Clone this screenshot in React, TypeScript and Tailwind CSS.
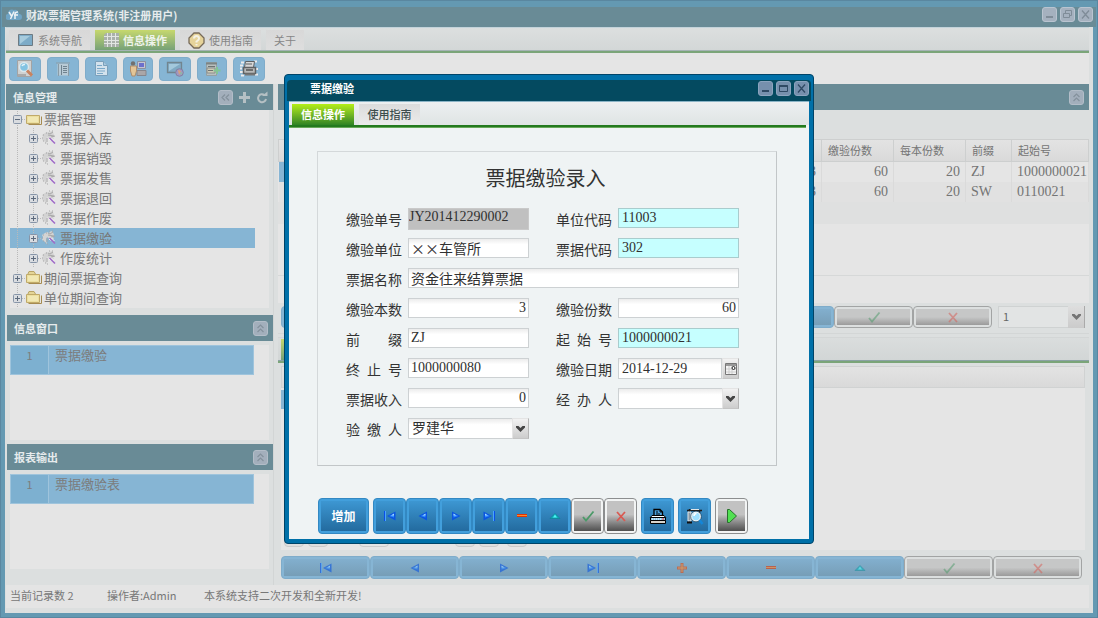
import { ReactNode } from "react";

type IconName =
  | "first"
  | "prev"
  | "next"
  | "last"
  | "plus"
  | "minus"
  | "up"
  | "check"
  | "cross";

type TreeNode = {
  label: string;
  level: 1 | 2;
  open?: boolean;
  selected?: boolean;
};

const treeNodes: TreeNode[] = [
  { label: "票据管理", level: 1, open: true },
  { label: "票据入库", level: 2 },
  { label: "票据销毁", level: 2 },
  { label: "票据发售", level: 2 },
  { label: "票据退回", level: 2 },
  { label: "票据作废", level: 2 },
  { label: "票据缴验", level: 2, selected: true },
  { label: "作废统计", level: 2 },
  { label: "期间票据查询", level: 1 },
  { label: "单位期间查询", level: 1 },
];

const records = [
  { books: "3", copies: "60", perBook: "20", prefix: "ZJ", start: "1000000021" },
  { books: "3", copies: "60", perBook: "20", prefix: "SW", start: "0110021" },
];

const navIcons: IconName[] = [
  "first",
  "prev",
  "next",
  "last",
  "plus",
  "minus",
  "up",
  "check",
  "cross",
];

const iconLabels: Record<IconName, string> = {
  first: "首条",
  prev: "上一条",
  next: "下一条",
  last: "末条",
  plus: "增加",
  minus: "删除",
  up: "编辑",
  check: "保存",
  cross: "取消",
};

const serif =
  "font-['Liberation_Serif','Noto_Sans_CJK_SC',serif] text-sm leading-4";

const NavIcon = ({ name }: { name: IconName }) => (
  <svg width="14" height="12" viewBox="0 0 14 12" className="shrink-0" aria-hidden="true">
    {name === "first" && (
      <>
        <path d="M1 1h1v10H1z" fill="#0a50e6" />
        <path d="M2 1h1v10H2z" fill="#4aa4ff" />
        <path d="M12.500 1.500v9L4 6z" fill="#0b55e0" />
        <path d="M11 4v3.500L6 6z" fill="#2f8cff" />
        <path d="M11 3.500v2L8 5.500z" fill="#a8dcff" />
      </>
    )}
    {name === "prev" && (
      <>
        <path d="M11 1.500v9L2.500 6z" fill="#0b55e0" />
        <path d="M9.500 4v3.500L4.500 6z" fill="#2f8cff" />
        <path d="M9.500 3.500v2L6.500 5.500z" fill="#a8dcff" />
      </>
    )}
    {name === "next" && (
      <>
        <path d="M3 1.500v9L11.500 6z" fill="#0b55e0" />
        <path d="M4.500 4v3.500l5-1.500z" fill="#2f8cff" />
        <path d="M4.500 3.500v2h3z" fill="#a8dcff" />
      </>
    )}
    {name === "last" && (
      <>
        <path d="M1.500 1.500v9L10 6z" fill="#0b55e0" />
        <path d="M3 4v3.500l5-1.500z" fill="#2f8cff" />
        <path d="M3 3.500v2h3z" fill="#a8dcff" />
        <path d="M11 1h1v10h-1z" fill="#4aa4ff" />
        <path d="M12 1h1v10h-1z" fill="#0a50e6" />
      </>
    )}
    {name === "plus" && (
      <>
        <path d="M5.500 1h3v3.500H12v3H8.500V11h-3V7.500H2v-3h3.500z" fill="#e64a10" />
        <path d="M7 2v8M3 6h8" stroke="#ff9a38" strokeWidth="1" />
      </>
    )}
    {name === "minus" && (
      <>
        <path d="M2 4h10v3H2z" fill="#e03406" />
        <path d="M2 5h10v1H2z" fill="#ff8c28" />
      </>
    )}
    {name === "up" && (
      <>
        <path d="M2 8.500L7 3.500l5 5z" fill="#12b0bc" stroke="#07838f" strokeWidth=".6" />
        <path d="M5 7.500L7 4.500 9 7.500z" fill="#4ff4f4" />
      </>
    )}
    {name === "check" && (
      <path d="M2 7l3 3.500L12.500 1.500" fill="none" stroke="#4b9a68" strokeWidth="1.800" />
    )}
    {name === "cross" && (
      <path d="M3 2l8 9M11 2l-8 9" fill="none" stroke="#d85a52" strokeWidth="1.800" />
    )}
  </svg>
);

const isGrey = (name: IconName) => name === "check" || name === "cross";

const DimButton = ({ name }: { name: IconName }) => (
  <button
    type="button"
    aria-label={iconLabels[name]}
    className={
      isGrey(name)
        ? "h-full min-w-0 flex-1 rounded border border-[#a2a4a4] bg-[#dcdfdf] p-[2px]"
        : "h-full min-w-0 flex-1 rounded border border-[#7facca] bg-[#86b5d4] p-[2px]"
    }
  >
    <span
      className={
        isGrey(name)
          ? "flex h-full items-center justify-center bg-linear-to-b from-[#c6c7c7] from-50% to-[#9b9b9b]"
          : "flex h-full items-center justify-center bg-linear-to-b from-[#82afce] to-[#779eb7]"
      }
    >
      <span className={isGrey(name) ? "opacity-50" : "opacity-60"}>
        <NavIcon name={name} />
      </span>
    </span>
  </button>
);

const DialogButton = ({
  label,
  grey,
  wide,
  children,
}: {
  label: string;
  grey?: boolean;
  wide?: boolean;
  children: ReactNode;
}) => (
  <button
    type="button"
    aria-label={label}
    className={`h-9 rounded border p-[2px] ${wide ? "w-[51px]" : "w-[33px]"} ${
      grey ? "border-[#8c8e8f] bg-[#f2f4f4]" : "border-[#3388c2] bg-[#429fdc]"
    }`}
  >
    <span
      className={`flex h-full items-center justify-center text-xs font-bold text-white ${
        grey
          ? "bg-linear-to-b from-[#c2c2c2] from-45% to-[#505050]"
          : "bg-linear-to-b from-[#3d97d2] to-[#236b9f]"
      }`}
    >
      {children}
    </span>
  </button>
);

const WindowButton = ({
  kind,
  dim,
}: {
  kind: "min" | "max" | "restore" | "close";
  dim?: boolean;
}) => (
  <button
    type="button"
    aria-label={kind}
    className={`flex size-[15px] items-center justify-center rounded-[3px] border ${
      dim
        ? "border-[#b9c4d0] bg-[#a5b1bf] text-[#7f8c98]"
        : "border-[#8ba4be] bg-[#7690ad] text-[#2f4a64]"
    }`}
  >
    <svg
      width="11"
      height="11"
      viewBox="0 0 11 11"
      fill="none"
      stroke="currentColor"
      className="shrink-0"
    >
      {kind === "min" && <path d="M2 8h7" strokeWidth="2" />}
      {kind === "max" && (
        <>
          <path d="M1.500 2.500h8v6h-8z" />
          <path d="M1.500 3h8" strokeWidth="2" />
        </>
      )}
      {kind === "restore" && (
        <>
          <path d="M3.500 4.500v-3h6v5h-2" />
          <path d="M1.500 4.500h6v4h-6z" />
        </>
      )}
      {kind === "close" && <path d="M2 1.500l7 8M9 1.500l-7 8" strokeWidth="1.300" />}
    </svg>
  </button>
);

const CollapseButton = ({ left }: { left?: boolean }) => (
  <button
    type="button"
    aria-label="折叠"
    className="flex size-[15px] items-center justify-center rounded-[3px] border border-[#b3bdc8] bg-[#a3afbc]"
  >
    <svg
      width="9"
      height="9"
      viewBox="0 0 9 9"
      fill="none"
      stroke="#84919c"
      className="shrink-0"
    >
      {left ? (
        <path d="M4 1.500L1 4.500l3 3M8 1.500L5 4.500l3 3" strokeWidth="1.200" />
      ) : (
        <path d="M1.500 4l3-3 3 3M1.500 8l3-3 3 3" strokeWidth="1.200" />
      )}
    </svg>
  </button>
);

const PanelHeader = ({ title, children }: { title?: string; children: ReactNode }) => (
  <div className="flex h-[26px] shrink-0 items-center justify-between bg-[#698b96] pl-[7px] pr-[5px] text-[11px] font-bold text-[#e6ebed]">
    <h2>{title}</h2>
    <div className="flex items-center gap-1">{children}</div>
  </div>
);

const Arrow = () => (
  <svg width="9" height="6" viewBox="0 0 9 6" aria-hidden="true">
    <path d="M0 0h2.500l2 2 2-2H9v1.500L4.500 6 0 1.500z" fill="currentColor" />
  </svg>
);

// tool bar pictures
const toolIcons: { label: string; narrow?: boolean; drawing: ReactNode }[] = [
  {
    label: "查询",
    drawing: (
      <>
        <path d="M1.500.500h14v16h-14z" fill="#cfd1d1" stroke="#a3a3a3" />
        <path d="M2 14h8v2H2z" fill="#a9a9a9" />
        <circle cx="8" cy="7" r="4.500" fill="#83c3e2" stroke="#dbe7ec" strokeWidth="1.500" />
        <path d="M6 6q1-2 3-1.500" stroke="#e2f3fa" strokeWidth="1.500" />
        <path d="M11 10.500l5 5" stroke="#c9825f" strokeWidth="3" />
      </>
    ),
  },
  {
    label: "列表",
    drawing: (
      <>
        <path d="M3.500 3.500h11v12h-11z" fill="#b9cbd6" />
        <path d="M2 3h14M4.500 4v12M14.500 4v12" stroke="#8a9ca7" />
        <path d="M7.500 5v10M9 6.500h4M9 8.500h4M9 10.500h4M9 12.500h4" stroke="#6f828e" />
      </>
    ),
  },
  {
    label: "文档",
    drawing: (
      <>
        <path d="M3.500 1.500h8l4 4v10h-12z" fill="#d3e2ed" stroke="#7aa0bb" />
        <path d="M11.500 1.500v4h4" fill="#a5c6dd" stroke="#7aa0bb" />
        <path d="M5 5.500h5M5 8.500h8M5 11h8M5 13.500h6" stroke="#7aa8c8" />
      </>
    ),
  },
  {
    label: "用户",
    narrow: true,
    drawing: (
      <>
        <path d="M8.500 1.500h8v7h-8z" fill="#c4c6d0" stroke="#8c90a0" />
        <path d="M10 3h5v4h-5z" fill="#6c70cc" />
        <path d="M8 10.500h9v5H8z" fill="#aaa6a8" stroke="#86868c" />
        <circle cx="4" cy="3.500" r="2.200" fill="#707070" />
        <path d="M1.500 6h6v5l-1.500 5H3l-1.500-5z" fill="#e3c597" stroke="#ae8d6b" />
      </>
    ),
  },
  {
    label: "网络",
    drawing: (
      <>
        <path d="M1.500 2.500h14v10h-14z" fill="#80aac4" stroke="#71858f" strokeWidth="1.300" />
        <path d="M3 4h11L3 11z" fill="#a3c8dc" />
        <circle cx="13.500" cy="12.500" r="3.800" fill="#9f98c3" stroke="#8580a0" />
        <path d="M12 10l3 1-2 4z" fill="#dba07a" />
        <path d="M14.500 12l2 1-2 2z" fill="#8cc29a" />
      </>
    ),
  },
  {
    label: "导入",
    narrow: true,
    drawing: (
      <>
        <path d="M3.500 2.500h10v13h-10z" fill="#b8bfbe" stroke="#93a0a4" />
        <path d="M3 3.500h11" stroke="#7c8484" strokeWidth="2" />
        <path d="M4 8h8v5H4z" fill="#cfcbb7" stroke="#8a8e8c" />
        <path d="M5 6.500h7M5 10.500h5" stroke="#6d7372" />
        <path d="M14 7v7M10.500 10.500h7" stroke="#81c595" strokeWidth="2" />
      </>
    ),
  },
  {
    label: "打印",
    drawing: (
      <>
        <path
          d="M1 2.500h3M14 1.500h3M0 5.500h3M0 8.500h2M0 12h3M15 14.500h3M1 15.500h3M16 9h2"
          stroke="#ececec"
          strokeWidth="2"
        />
        <path d="M5.500 1.500h9l-1 6h-9z" fill="#d8d8d8" stroke="#5f6263" />
        <path d="M6 4h6" stroke="#5f6263" />
        <path d="M3.500 7.500h12v6h-12z" fill="#b8bab9" stroke="#5f6263" strokeWidth="1.500" />
        <path d="M5 13.500h10v2H5z" fill="#777" />
        <path d="M6 10h7" stroke="#555" strokeWidth="1.500" />
      </>
    ),
  },
];

const TreeBox = ({ open }: { open?: boolean }) => (
  <svg width="15" height="20" viewBox="0 0 15 20" className="shrink-0" aria-hidden="true">
    <path d="M7.500 0v20M12 10.500h3" stroke="#b9b9b9" strokeDasharray="1 1" />
    <rect x="3.500" y="6.500" width="8" height="8" rx="1" fill="#d9dce0" stroke="#8795a8" />
    <path d={open ? "M5 10.500h5" : "M5 10.500h5M7.500 8v5"} stroke="#5d6a7c" />
  </svg>
);

const TreeLine = () => (
  <svg width="16" height="20" viewBox="0 0 16 20" className="shrink-0" aria-hidden="true">
    <path d="M7.500 0v20" stroke="#b9b9b9" strokeDasharray="1 1" />
  </svg>
);

const FolderIcon = ({ open }: { open?: boolean }) => (
  <svg width="18" height="16" viewBox="0 0 18 16" className="shrink-0" aria-hidden="true">
    {!open && <path d="M2.500 5L4 1.500h5L10.500 4" fill="#e4d597" stroke="#b8a466" />}
    <path d="M1.500 4.500h13v8h-13z" fill="#ecdf9f" stroke="#c0aa6a" />
    <path d="M3 6h10v5H3z" fill="#f1e8b4" />
    <path d="M3.500 13.500h13V5.500" fill="none" stroke="#a68b50" />
  </svg>
);

const WandIcon = () => (
  <svg width="18" height="16" viewBox="0 0 18 16" className="shrink-0" aria-hidden="true">
    <path
      d="M4 3l2-1 2 1 2-2 2 1 1 3-1 2 1 2-3 1-4-3-1 3 1 4-3-3-2-1 1-3-1-2z"
      fill="#d3d3d3"
    />
    <path
      d="M2 5h1M1 8h1M2 11h1M4 13h1M6 14h1M5 3h1M8 1h1M11 1h1M6 8v4"
      stroke="#a6a6a6"
    />
    <path d="M7 3l2 1 3-2M7 5l6 1M10 7l4-1" fill="none" stroke="#a8a8a8" />
    <path d="M8.500 8l5.500 5.500" stroke="#a06cc8" strokeWidth="1.600" />
    <path d="M8 9l1.500 1.500M10 7.500l3.500 3.500" stroke="#f0e8f5" />
  </svg>
);

const MainTab = ({ children, active }: { children: ReactNode; active?: boolean }) => (
  <button
    type="button"
    className={
      active
        ? "flex h-full items-center gap-1 bg-linear-to-b from-[#c6d86d] to-[#76a177] px-2 font-bold text-[#eef3ea]"
        : "flex h-full items-center gap-1 bg-linear-to-b from-[#d8d8d8] to-[#dedede] px-2 text-[#868686]"
    }
  >
    {children}
  </button>
);

const ListPanel = ({ item, grow }: { item: string; grow?: boolean }) => (
  <div className={`mx-1 my-1 bg-[#e5e5e5] pr-[15px] ${grow ? "flex-1" : "h-[95px]"}`}>
    <table className="h-[30px] w-full border border-[#9fc4dc] bg-[#86b5d4] text-[13px] leading-4 text-[#7c7c7c]">
      <tbody>
        <tr className="align-top">
          <td className="w-[38px] border-r border-[#9fc4dc] bg-[#7db0d0] pt-px text-center text-[11px]">
            1
          </td>
          <td className="pl-[6px] pt-px">{item}</td>
        </tr>
      </tbody>
    </table>
  </div>
);

const Field = ({
  id,
  label,
  value,
  tone = "white",
  right,
  wide,
  sans,
}: {
  id: string;
  label: string;
  value: string;
  tone?: "white" | "cyan" | "grey";
  right?: boolean;
  wide?: boolean;
  sans?: boolean;
}) => {
  const tones = {
    white: "h-5 border-[#cdd1d3] bg-linear-to-b from-[#ececec] to-white to-30% px-[2px]",
    cyan: "h-5 border-[#a9cccd] bg-[#c6ffff] px-[3px]",
    grey: "h-[22px] border-[#c9c9c9] bg-[#c0c0c0] px-0 pb-1",
  };
  return (
    <div className={`flex h-[22px] gap-[6px] ${wide ? "col-span-2" : ""}`}>
      <FieldLabel id={id} label={label} />
      <input
        id={id}
        lang="zh-CN"
        defaultValue={value}
        readOnly={tone === "grey"}
        className={`min-w-0 flex-1 border text-[#303030] outline-none ${
          sans ? "text-sm leading-4" : serif
        } ${tones[tone]} ${right ? "text-right" : ""}`}
      />
    </div>
  );
};

const FieldLabel = ({ id, label }: { id: string; label: string }) => (
  <label
    htmlFor={id}
    className="w-14 shrink-0 whitespace-nowrap pt-px text-sm leading-5 [text-align-last:justify]"
  >
    {label}
  </label>
);

const SelectField = ({ id, label, value }: { id: string; label: string; value: string }) => (
  <div className="flex h-[22px] gap-[6px]">
    <FieldLabel id={id} label={label} />
    <div className="relative min-w-0 flex-1">
      <select
        id={id}
        className={`block h-[21px] w-full appearance-none border border-[#cdd1d3] bg-linear-to-b from-[#ececec] to-white to-30% pl-[3px] text-[#303030] ${serif}`}
      >
        <option>{value}</option>
      </select>
      <span className="pointer-events-none absolute right-0 top-0 flex h-[21px] w-[17px] items-center justify-center border border-b-[#c4c4c4] border-l-[#e4e4e4] border-r-[#b5b5b5] border-t-[#e4e4e4] bg-linear-to-b from-[#f2f2f2] to-[#cdcdcd] text-[#444]">
        <Arrow />
      </span>
    </div>
  </div>
);

const Dialog = () => (
  <section
    role="dialog"
    aria-label="票据缴验"
    className="absolute left-[284px] top-[74px] w-[530px] rounded border border-[#004468] bg-[#0070a8] p-1 pt-[5px] text-[#333]"
  >
    <div className="-mx-[2px] flex h-[21px] items-center justify-between rounded-t-sm bg-[#044a60] pb-[5px] pl-[23px] pr-[2px]">
      <h2 className="text-[11px] font-bold text-white">票据缴验</h2>
      <div className="flex gap-[3px]">
        <WindowButton kind="min" />
        <WindowButton kind="max" />
        <WindowButton kind="close" />
      </div>
    </div>
    <div className="bg-[#eff3f4] pb-[5px]">
      <div className="flex h-6 gap-[5px] border-t border-[#8bb4c6] bg-linear-to-b from-[#edf0f1] to-[#dfe4e4] pl-[3px] pt-[2px] text-[11px]">
        <button
          type="button"
          className="w-[62px] bg-linear-to-b from-[#b4ee14] to-[#2e8424] font-bold text-white"
        >
          信息操作
        </button>
        <button
          type="button"
          className="w-[61px] bg-linear-to-b from-[#dcdcdc] to-[#ebebeb] font-medium text-[#3c4c4c]"
        >
          使用指南
        </button>
      </div>
      <div className="mr-[3px] h-[3px] border-b border-b-[#68a85a] bg-[#237a1e]" />

      <form className="ml-7 mr-8 mt-[23px] h-[315px] border border-b-[#c2c6c8] border-l-[#d4d8da] border-r-[#c2c6c8] border-t-[#d4d8da] pl-7 pr-[37px] pt-3">
        <h1 className="mb-4 pl-[6px] text-center text-xl leading-7">票据缴验录入</h1>
        <div className="grid grid-cols-2 gap-x-[27px] gap-y-2">
          <Field id="no" label="缴验单号" value="JY201412290002" tone="grey" />
          <Field id="unitCode" label="单位代码" value="11003" tone="cyan" />
          <Field id="unit" label="缴验单位" value="××车管所" sans />
          <Field id="billCode" label="票据代码" value="302" tone="cyan" />
          <Field id="billName" label="票据名称" value="资金往来结算票据" wide sans />
          <Field id="books" label="缴验本数" value="3" right />
          <Field id="copies" label="缴验份数" value="60" right />
          <Field id="prefix" label="前 缀" value="ZJ" />
          <Field id="start" label="起 始 号" value="1000000021" tone="cyan" />
          <Field id="end" label="终 止 号" value="1000000080" />
          <div className="flex h-[22px] gap-[6px]">
            <FieldLabel id="date" label="缴验日期" />
            <div className="flex h-[21px] min-w-0 flex-1">
              <input
                id="date"
                defaultValue="2014-12-29"
                className={`min-w-0 flex-1 border border-[#cdd1d3] bg-linear-to-b from-[#ececec] to-white to-30% px-[3px] text-[#303030] ${serif}`}
              />
              <button
                type="button"
                aria-label="选择日期"
                className="flex w-[17px] items-center justify-center border border-b-[#c4c4c4] border-l-[#e4e4e4] border-r-[#b5b5b5] border-t-[#e4e4e4] bg-linear-to-b from-[#f2f2f2] to-[#cdcdcd]"
              >
                <svg width="12" height="12" viewBox="0 0 12 12" className="shrink-0">
                  <path d="M.5.500h11v11H.5z" fill="#f4f4f4" stroke="#777" />
                  <path d="M1 2h10" stroke="#999" strokeWidth="2" />
                  <path d="M4 3v8M7 3v8M1 6h10M1 9h10" stroke="#ccc" />
                  <circle cx="8.500" cy="5" r="1.500" fill="#fff" stroke="#222" />
                </svg>
              </button>
            </div>
          </div>
          <Field id="income" label="票据收入" value="0" right />
          <SelectField id="handler" label="经 办 人" value="" />
          <SelectField id="checker" label="验 缴 人" value="罗建华" />
        </div>
      </form>

      <div className="ml-[29px] mt-8 flex gap-1">
        <DialogButton label="增加" wide>
          增加
        </DialogButton>
        <div className="flex">
          {navIcons
            .filter((name) => name !== "plus")
            .map((name) => (
              <DialogButton key={name} label={iconLabels[name]} grey={isGrey(name)}>
                <NavIcon name={name} />
              </DialogButton>
            ))}
        </div>
        <DialogButton label="打印">
          <svg width="18" height="17" viewBox="0 0 18 17">
            <path d="M5 7V1.500h6l2.500 2.500v3" fill="#4aa0dc" stroke="#000" strokeWidth="1.300" />
            <path d="M7 4h2M7 6h4M11 2v2h2" stroke="#000" fill="none" />
            <path d="M3 7.500h12l2 2.500H1z" fill="#fff" stroke="#000" />
            <path d="M1.500 9.500h15v3h-15z" fill="#8cc8ec" stroke="#000" />
            <path d="M3 11h11" stroke="#fff" strokeDasharray="1 1" />
            <path d="M13 11h2" stroke="#e03030" />
            <path d="M1.500 12.500h15v3h-15z" fill="#d8d4cc" stroke="#000" />
          </svg>
        </DialogButton>
        <DialogButton label="预览">
          <svg width="18" height="17" viewBox="0 0 18 17">
            <path d="M1 2.500h15M3.500 1v13M13.500 2v3" stroke="#1c1c1c" strokeWidth="1.500" />
            <path d="M2 4h3v9H2zM5 1.500h8" fill="#8a9aa5" stroke="#e2e6e8" />
            <path d="M1 14.500h5" stroke="#111" strokeWidth="2" />
            <circle cx="10" cy="8.500" r="4.500" fill="#9fe0ff" stroke="#eef6fa" strokeWidth="1.500" />
            <circle cx="10" cy="8.500" r="5.300" fill="none" stroke="#12344c" strokeWidth=".6" />
            <path d="M8 8c0-1.500 1-2.500 2.500-2.500" fill="none" stroke="#fff" strokeWidth="1.500" />
            <path d="M13.500 12l3 4" stroke="#1486d8" strokeWidth="2.500" />
          </svg>
        </DialogButton>
        <DialogButton label="执行" grey>
          <svg width="12" height="16" viewBox="0 0 12 16">
            <path d="M1.500 1.500h2l7 6.500-7 6.500h-2z" fill="#52e052" stroke="#28702c" />
          </svg>
        </DialogButton>
      </div>
    </div>
  </section>
);

const Sidebar = () => (
  <aside className="flex w-[268px] shrink-0 flex-col border-r border-[#d2d5d5] pb-3">
    <PanelHeader title="信息管理">
      <CollapseButton left />
      <button type="button" aria-label="展开">
        <svg width="15" height="14" viewBox="0 0 15 14">
          <path d="M7.500 2v11M2 7.500h11" stroke="#b5c0c4" strokeWidth="3" />
        </svg>
      </button>
      <button type="button" aria-label="刷新">
        <svg width="12" height="14" viewBox="0 0 12 14">
          <path d="M8.500 5A4 4 0 1 0 10 9" fill="none" stroke="#b5c0c4" strokeWidth="2" />
          <path d="M6 6h5.500V1.500z" fill="#b5c0c4" />
        </svg>
      </button>
    </PanelHeader>
    <ul className="mx-1 bg-[#e5e5e5] text-[13px] leading-5 text-[#777]">
      {treeNodes.map((node) => (
        <li
          key={node.label}
          className={`mr-[14px] flex items-center overflow-hidden whitespace-nowrap ${
            node.open ? "h-[18px]" : "h-5"
          } ${node.selected ? "bg-[#86b5d4]" : ""}`}
        >
          {node.level === 2 && <TreeLine />}
          <TreeBox open={node.open} />
          {node.level === 1 ? <FolderIcon open={node.open} /> : <WandIcon />}
          <span className="ml-px">{node.label}</span>
        </li>
      ))}
    </ul>
    <div className="ml-px mt-[7px]">
      <PanelHeader title="信息窗口">
        <CollapseButton />
      </PanelHeader>
    </div>
    <ListPanel item="票据缴验" />
    <div className="ml-px">
      <PanelHeader title="报表输出">
        <CollapseButton />
      </PanelHeader>
    </div>
    <ListPanel item="票据缴验表" grow />
  </aside>
);

const Records = () => (
  <main className="flex min-w-0 flex-1 flex-col">
    <PanelHeader>
      <CollapseButton />
    </PanelHeader>
    <div className="mt-[29px] bg-[#e5e5e5]">
      <table className="w-full table-fixed text-[#747474]">
        <colgroup>
          <col className="w-7" />
          <col />
          <col className="w-[72px]" />
          <col className="w-[72px]" />
          <col className="w-[46px]" />
          <col className="w-[77px]" />
        </colgroup>
        <thead>
          <tr className="h-[22px] bg-linear-to-b from-[#e3e3e3] to-[#d9d9d9] text-left text-[11px] *:border *:border-[#cdcfcf] *:px-[6px] *:font-normal">
            <th />
            <th />
            <th>缴验份数</th>
            <th>每本份数</th>
            <th>前缀</th>
            <th>起始号</th>
          </tr>
        </thead>
        <tbody className={serif}>
          {records.map((record, i) => (
            <tr
              key={record.start}
              className={`h-5 *:border-r *:border-[#dadada] *:px-[5px] ${
                i % 2 ? "bg-[#e1e1e1]" : "bg-[#e5e5e5]"
              }`}
            >
              <td className={i === 0 ? "bg-[#86b5d4]" : ""} />
              <td className="text-right">{record.books}</td>
              <td className="text-right">{record.copies}</td>
              <td className="text-right">{record.perBook}</td>
              <td>{record.prefix}</td>
              <td>{record.start}</td>
            </tr>
          ))}
        </tbody>
      </table>
      <div className="h-[22px] bg-[#dfe0e0]" />
      <div className="h-[52px] border-b border-[#d6d8d8]" />
      <div className="h-[27px]" />
    </div>
    <div className="ml-[3px] mr-1 mt-[3px] flex h-[22px] gap-[6px]">
      <div className="flex min-w-0 flex-1">
        {navIcons.map((name) => (
          <DimButton key={name} name={name} />
        ))}
      </div>
      <div className="relative w-[87px]">
        <select
          aria-label="页码"
          className="block h-[22px] w-full appearance-none border border-[#cfd2d2] bg-[#e2e4e4] pl-1 text-[11px] text-[#666]"
        >
          <option>1</option>
        </select>
        <span className="pointer-events-none absolute right-0 top-0 flex h-full w-[17px] items-center justify-center border-r border-[#aaa] bg-linear-to-b from-[#dedede] to-[#cbcbcb] text-[#757575]">
          <Arrow />
        </span>
      </div>
    </div>
    <div className="mt-[5px] h-[5px] border-y border-[#d3d6d6]" />
    <div className="flex h-[22px] bg-linear-to-b from-[#dadddd] to-[#d2d6d6] pl-[3px] pt-px">
      <button
        type="button"
        aria-label="明细"
        className="w-16 bg-linear-to-b from-[#c6d86d] to-[#76a177]"
      />
    </div>
    <div className="h-[3px] border-t border-[#8ba2a4] bg-[#7ba579]" />
    <div className="ml-[3px] mr-1 mt-[3px] flex flex-1 flex-col bg-[#e5e5e5]">
      <div className="h-[22px] border border-[#d0d2d2] bg-linear-to-b from-[#e3e3e3] to-[#d9d9d9]" />
      <div className="mt-[2px] h-[19px] w-7 bg-[#86b5d4]" />
      <div className="mb-[3px] mt-auto flex h-5 gap-1 pl-[3px] *:rounded *:border *:border-[#cbcbcb]">
        <button type="button" aria-label="首页" className="w-5 bg-[#dedede]" />
        <button type="button" aria-label="上一页" className="w-5 bg-[#dedede]" />
        <input aria-label="跳转页" className="ml-[27px] w-[30px]" />
        <button type="button" aria-label="下一页" className="ml-[62px] w-5 bg-[#dedede]" />
        <button type="button" aria-label="末页" className="w-5 bg-[#dedede]" />
        <button type="button" aria-label="刷新" className="ml-1 w-5 bg-[#dedede]" />
      </div>
    </div>
    <div className="mb-[6px] ml-[3px] mr-[7px] mt-[6px] flex h-[23px]">
      {navIcons.map((name) => (
        <DimButton key={name} name={name} />
      ))}
    </div>
  </main>
);

const App = () => {
  return (
    <div className="relative flex min-h-screen flex-col bg-[#6499b2] font-['Noto_Sans_CJK_SC',sans-serif] text-[#777] shadow-[inset_0_0_0_1px_#5a87a0]">
      <header className="mx-[2px] mt-[7px] flex h-5 items-center justify-between bg-[#698b96] pb-[5px] pl-1 pr-[3px]">
        <div className="flex items-center gap-1">
          <svg width="16" height="14" viewBox="0 0 16 14" aria-hidden="true">
            <path d="M3 12a3 3 0 0 1-1-6 4 4 0 0 1 6-4 4 4 0 0 1 5 4 3 3 0 0 1 0 6z" fill="#6fa4c5" />
            <path
              d="M3 4l2.500 4M8 3.500L4.500 11M9 11V6q0-2 3-2M8 7h4"
              fill="none"
              stroke="#edf2f5"
              strokeWidth="1.500"
            />
          </svg>
          <h1 className="text-[11px] font-bold leading-4 text-[#e6ebed]">
            财政票据管理系统(非注册用户)
          </h1>
        </div>
        <div className="flex gap-[3px]">
          <WindowButton kind="min" dim />
          <WindowButton kind="restore" dim />
          <WindowButton kind="close" dim />
        </div>
      </header>

      <div className="mx-[5px] mb-[5px] flex flex-1 flex-col bg-[#dcdfdf] pb-[5px] pl-px pr-1">
        <nav className="flex h-[23px] gap-[5px] border-t border-[#c3d3da] bg-linear-to-b from-[#dcdfdf] to-[#d3d7d7] pl-[3px] pt-[2px] text-[11px]">
          <MainTab>
            <svg width="17" height="14" viewBox="0 0 17 14">
              <path d="M1.500 1.500h14v11h-14z" fill="#7dabc7" stroke="#6d7a82" />
              <path d="M3 3h10L3 11z" fill="#a7cbdd" />
            </svg>
            系统导航
          </MainTab>
          <MainTab active>
            <svg width="16" height="14" viewBox="0 0 16 14">
              <path d="M3 0h13v14H1V2z" fill="#a9b0aa" />
              <path
                d="M4.500 0v14M8.500 0v14M12.500 0v14M1 3.500h15M1 7.500h15M1 10.500h15"
                stroke="#e3e6e3"
              />
            </svg>
            信息操作
          </MainTab>
          <MainTab>
            <svg width="17" height="17" viewBox="0 0 17 17">
              <path d="M6 1h5l5 5v5l-5 5H6l-5-5V6z" fill="#e6d39a" stroke="#776a58" strokeWidth="1.300" />
              <path
                d="M6 6.500q0-2.500 2.500-2.500T11 6.500Q11 8 8.500 9.500v1M8.500 12v1.500"
                fill="none"
                stroke="#f5f2e4"
                strokeWidth="2"
              />
            </svg>
            使用指南
          </MainTab>
          <MainTab>关于</MainTab>
        </nav>
        <div className="h-[3px] border-t border-[#a4b3b4] bg-[#7ba579]" />

        <div className="flex h-[31px] items-center gap-[6px] bg-[#e5e5e5] pl-[3px]">
          {toolIcons.map((tool) => (
            <button
              key={tool.label}
              type="button"
              aria-label={tool.label}
              className={`flex h-6 items-center justify-center rounded border border-[#7facca] bg-[#86b5d4] ${
                tool.narrow ? "w-[30px]" : "w-8"
              }`}
            >
              <svg width="18" height="17" viewBox="0 0 18 17" fill="none" className="shrink-0">
                {tool.drawing}
              </svg>
            </button>
          ))}
        </div>

        <div className="flex flex-1 gap-1">
          <Sidebar />
          <Records />
        </div>

        <footer className="flex h-[23px] items-center bg-[#e4e4e4] pb-[2px] pl-1 text-[11px]">
          <span className="w-[97px]">当前记录数 2</span>
          <span className="w-[97px]">操作者:Admin</span>
          <span>本系统支持二次开发和全新开发!</span>
        </footer>
      </div>

      <Dialog />
    </div>
  );
};

export default App;
